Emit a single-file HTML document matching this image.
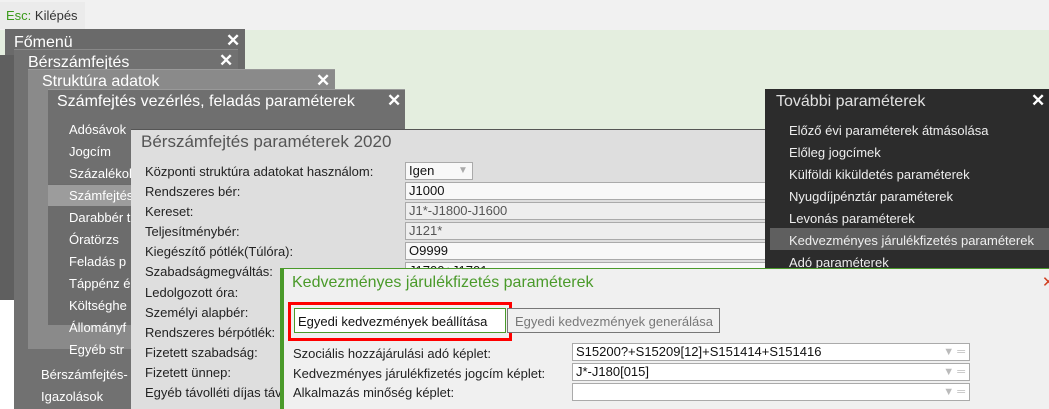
<!DOCTYPE html>
<html style="overflow:hidden"><head><meta charset="utf-8"><style>
*{box-sizing:border-box;margin:0;padding:0}
html,body{width:1049px;height:409px;overflow:hidden}
body{position:relative;font-family:"Liberation Sans",sans-serif;font-size:13px;background:#e4eedf}
.a{position:absolute}
.t{position:absolute;white-space:nowrap}
.w{color:#fff}
.x{position:absolute;color:#fff;font-size:17px;font-weight:bold}
.inp{position:absolute;height:18px;border:1px solid #aaa;background:#f8f8f8;padding-left:3px;line-height:16px;font-size:13px;color:#111;white-space:nowrap;overflow:hidden}
</style></head><body>
<div class="a" style="left:0;top:0;width:1049px;height:30px;background:#f1f1f1"></div>
<div class="a" style="left:0;top:2px;width:85px;height:27px;background:#ebebeb"></div>
<div class="t" style="left:6px;top:8px;font-size:13px"><span style="color:#3a9a1a">Esc:</span> <span style="color:#333">Kilépés</span></div>
<div class="a" style="left:0;top:300px;width:14px;height:109px;background:#fff"></div>
<div class="a" style="left:5px;top:29px;width:240px;height:271px;background:#6a6a6a"></div>
<div class="a" style="left:0;top:55px;width:14px;height:245px;background:#5f5f5f"></div>
<div class="t w" style="left:14px;top:34px;font-size:16px">Főmenü</div>
<div class="x" style="left:226px;top:31px">✕</div>
<div class="a" style="left:14px;top:49px;width:224px;height:360px;background:#717171;border-top:1px solid #888"></div>
<div class="t w" style="left:28px;top:54px;font-size:16px">Bérszámfejtés</div>
<div class="x" style="left:219px;top:51px">✕</div>
<div class="t w" style="left:41px;top:367px">Bérszámfejtés-</div>
<div class="t w" style="left:41px;top:389px">Igazolások</div>
<div class="a" style="left:28px;top:69px;width:307px;height:280px;background:#8a8a8a;border-top:1px solid #999"></div>
<div class="t w" style="left:42px;top:73px;font-size:16px">Struktúra adatok</div>
<div class="x" style="left:316px;top:71px">✕</div>
<div class="a" style="left:48px;top:89px;width:357px;height:95px;background:#6f6f6f;border-top:1px solid #999"></div>
<div class="a" style="left:48px;top:184px;width:83px;height:141px;background:#6c6c6c"></div>
<div class="a" style="left:48px;top:185px;width:83px;height:21px;background:#9c9c9c"></div>
<div class="t w" style="left:57px;top:93px;font-size:16px">Számfejtés vezérlés, feladás paraméterek</div>
<div class="x" style="left:387px;top:91px">✕</div>
<div class="t w" style="left:69px;top:122px">Adósávok</div>
<div class="t w" style="left:69px;top:144px">Jogcím</div>
<div class="t w" style="left:69px;top:166px">Százalékok</div>
<div class="t w" style="left:69px;top:188px">Számfejtés</div>
<div class="t w" style="left:69px;top:210px">Darabbér t</div>
<div class="t w" style="left:69px;top:232px">Óratörzs</div>
<div class="t w" style="left:69px;top:254px">Feladás p</div>
<div class="t w" style="left:69px;top:276px">Táppénz é</div>
<div class="t w" style="left:69px;top:298px">Költséghe</div>
<div class="t w" style="left:69px;top:320px">Állományf</div>
<div class="t w" style="left:69px;top:342px">Egyéb str</div>
<div class="a" style="left:131px;top:129px;width:640px;height:280px;background:#dedede;border-top:1px solid #555"></div>
<div class="t" style="left:141px;top:132px;font-size:17px;color:#555">Bérszámfejtés paraméterek 2020</div>
<div class="t" style="left:145px;top:162px;color:#222;line-height:20.1px">Központi struktúra adatokat használom:<br>Rendszeres bér:<br>Kereset:<br>Teljesítménybér:<br>Kiegészítő pótlék(Túlóra):<br>Szabadságmegváltás:<br>Ledolgozott óra:<br>Személyi alapbér:<br>Rendszeres bérpótlék:<br>Fizetett szabadság:<br>Fizetett ünnep:<br>Egyéb távolléti díjas táv</div>
<div class="inp" style="left:405px;top:162px;width:68px">Igen<span style="position:absolute;left:52px;top:0;color:#aaa;font-size:10px">▼</span></div>
<div class="inp" style="left:405px;top:182px;width:370px">J1000</div>
<div class="inp" style="left:405px;top:202px;width:370px;background:#eee;color:#555">J1*-J1800-J1600</div>
<div class="inp" style="left:405px;top:222px;width:370px;background:#eee;color:#555">J121*</div>
<div class="inp" style="left:405px;top:242px;width:370px">O9999</div>
<div class="inp" style="left:405px;top:262px;width:370px">J1700+J1701</div>
<div class="a" style="left:765px;top:89px;width:284px;height:180px;background:#2c2c2c"></div>
<div class="a" style="left:770px;top:228px;width:279px;height:22px;background:#5f5f5f"></div>
<div class="t" style="left:776px;top:93px;font-size:16px;color:#e0e0e0">További paraméterek</div>
<div class="x" style="left:1031px;top:91px">✕</div>
<div class="t" style="left:789px;top:120px;color:#eee;line-height:22px">Előző évi paraméterek átmásolása<br>Előleg jogcímek<br>Külföldi kiküldetés paraméterek<br>Nyugdíjpénztár paraméterek<br>Levonás paraméterek<br>Kedvezményes járulékfizetés paraméterek<br>Adó paraméterek</div>
<div class="a" style="left:280px;top:268px;width:769px;height:141px;background:#f0f0f0;border-top:1px solid #4a9a2a;border-left:4px solid #4a9a2a"></div>
<div class="t" style="left:292px;top:274px;font-size:16px;color:#4a9a2a">Kedvezményes járulékfizetés paraméterek</div>
<div class="t" style="left:1042px;top:273px;color:#d04020;font-size:15px">✕</div>
<div class="a" style="left:288px;top:302px;width:224px;height:39px;border:3px solid #f00"></div>
<div class="a" style="left:294px;top:308px;width:212px;height:25px;border:1px solid #4a9a2a;background:#fff"></div>
<div class="t" style="left:298px;top:314px;color:#111">Egyedi kedvezmények beállítása</div>
<div class="a" style="left:507px;top:308px;width:213px;height:25px;border:1px solid #777;background:#f0f0f0"></div>
<div class="t" style="left:515px;top:314px;color:#777">Egyedi kedvezmények generálása</div>
<div class="t" style="left:293px;top:344px;color:#222;line-height:19.5px">Szociális hozzájárulási adó képlet:<br>Kedvezményes járulékfizetés jogcím képlet:<br>Alkalmazás minőség képlet:</div>
<div class="inp" style="left:572px;top:343px;width:398px;background:#fff">S15200?+S15209[12]+S151414+S151416<span style="position:absolute;right:4px;top:0;color:#bbb;font-size:11px">▼ ═</span></div>
<div class="inp" style="left:572px;top:363px;width:398px;background:#fff">J*-J180[015]<span style="position:absolute;right:4px;top:0;color:#bbb;font-size:11px">▼ ═</span></div>
<div class="inp" style="left:572px;top:383px;width:398px;background:#fff"><span style="position:absolute;right:4px;top:0;color:#bbb;font-size:11px">▼ ═</span></div>
</body></html>
